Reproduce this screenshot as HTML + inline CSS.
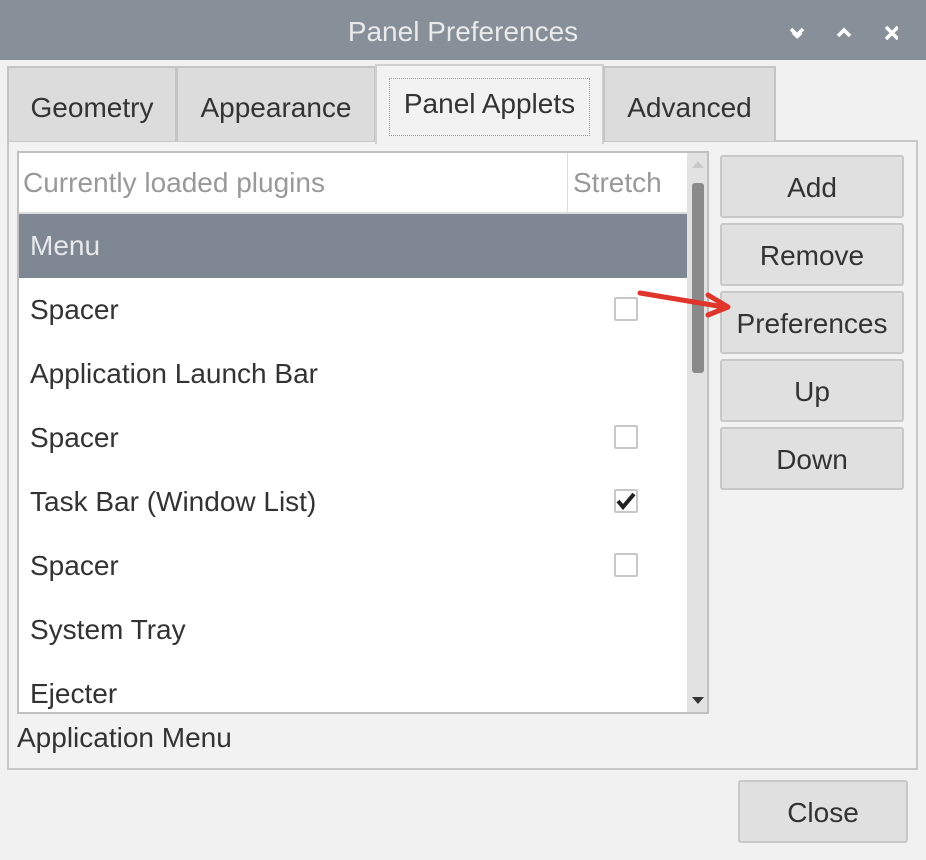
<!DOCTYPE html>
<html><head><meta charset="utf-8"><style>
*{box-sizing:border-box;margin:0;padding:0}
body{width:926px;height:860px;overflow:hidden;background:#f1f1f1;font-family:"Liberation Sans",sans-serif;color:#333;position:relative}
.abs{position:absolute}
.title{left:0;top:0;width:926px;height:60px;background:#878f98;color:#e8eaec;font-size:28px;text-align:center;line-height:64px}
.ctl{top:18px;color:#fff;font-size:22px;font-weight:bold}
.tab{top:66px;height:75px;background:#dcdcdc;border:2px solid #c4c4c4;border-bottom:none;font-size:28px;line-height:80px;text-align:center;color:#333}
.frame{left:7px;top:140px;width:911px;height:630px;border:2px solid #c8c8c8;background:#f2f2f2}
.list{left:17px;top:151px;width:692px;height:563px;border:2px solid #c0c0c0;background:#fff;overflow:hidden}
.row{position:absolute;left:0;width:668px;height:64px;font-size:28px;line-height:64px;padding-left:11px;color:#333}
.cb{position:absolute;left:595px;top:19px;width:24px;height:24px;border:2px solid #c8c8c8;background:#fff;border-radius:2px}
.btn{left:720px;width:184px;height:63px;background:#e0e0e0;border:2px solid #c8c8c8;border-radius:3px;font-size:28px;text-align:center;line-height:62px;color:#333}
</style></head><body>
<div class="abs title">Panel Preferences</div>
<div class="abs ctl" style="left:788px">&#8964;</div>
<svg class="abs" style="left:788px;top:24px" width="110" height="18"><path d="M3 5l6 6 6-6" stroke="#fff" stroke-width="3.5" fill="none"/><path d="M50 12l6-6 6 6" stroke="#fff" stroke-width="3.5" fill="none"/><path d="M98 3l12 12M110 3l-12 12" stroke="#fff" stroke-width="3.5"/></svg>
<div class="abs frame"></div>
<div class="abs tab" style="left:7px;width:170px">Geometry</div>
<div class="abs tab" style="left:176px;width:200px">Appearance</div>
<div class="abs tab" style="left:375px;width:229px;background:#f2f2f2;top:64px;height:80px;border-color:#d0d0d0"><div style="position:absolute;left:12px;top:12px;right:12px;bottom:8px;border:1px dotted #999;line-height:50px">Panel Applets</div></div>
<div class="abs tab" style="left:603px;width:173px">Advanced</div>
<div class="abs list">
 <div class="row" style="top:0;height:59px;line-height:60px;color:#999;padding-left:4px">Currently loaded plugins</div>
 <div style="position:absolute;left:548px;top:0;width:1px;height:59px;background:#ddd"></div>
 <div class="row" style="top:0;left:554px;width:120px;height:59px;line-height:60px;color:#999;padding-left:0">Stretch</div>
 <div style="position:absolute;left:0;top:59px;width:668px;height:2px;background:#ddd"></div>
 <div class="row" style="top:61px;background:#7f8892;color:#e6e8ea">Menu</div>
 <div class="row" style="top:125px">Spacer<div class="cb"></div></div>
 <div class="row" style="top:189px">Application Launch Bar</div>
 <div class="row" style="top:253px">Spacer<div class="cb"></div></div>
 <div class="row" style="top:317px">Task Bar (Window List)<div class="cb"><svg width="22" height="22" style="position:absolute;left:-1px;top:-1px"><path d="M3 11l5 6 11-13" stroke="#222" stroke-width="4" fill="none"/></svg></div></div>
 <div class="row" style="top:381px">Spacer<div class="cb"></div></div>
 <div class="row" style="top:445px">System Tray</div>
 <div class="row" style="top:509px">Ejecter</div>
 <div style="position:absolute;left:668px;top:0;width:22px;height:560px;background:#e2e2e2"></div>
 <svg style="position:absolute;left:672px;top:6px" width="14" height="10"><path d="M1 9L7 2 13 9z" fill="#c8c8c8"/></svg>
 <div style="position:absolute;left:673px;top:30px;width:12px;height:190px;background:#8a8a8a;border-radius:3px"></div>
 <svg style="position:absolute;left:672px;top:543px" width="14" height="10"><path d="M1 1L7 8 13 1z" fill="#333"/></svg>
</div>
<div class="abs" style="left:17px;top:718px;font-size:28px;line-height:40px">Application Menu</div>
<div class="abs btn" style="top:155px">Add</div>
<div class="abs btn" style="top:223px">Remove</div>
<div class="abs btn" style="top:291px">Preferences</div>
<div class="abs btn" style="top:359px">Up</div>
<div class="abs btn" style="top:427px">Down</div>
<svg class="abs" style="left:636px;top:285px" width="100" height="40"><path d="M4 8L88 22" stroke="#e0352b" stroke-width="5" stroke-linecap="round"/><path d="M72 10L92 22 72 30" stroke="#e0352b" stroke-width="5" fill="none" stroke-linecap="round" stroke-linejoin="round"/></svg>
<div class="abs btn" style="left:738px;top:780px;width:170px;height:63px">Close</div>
</body></html>
